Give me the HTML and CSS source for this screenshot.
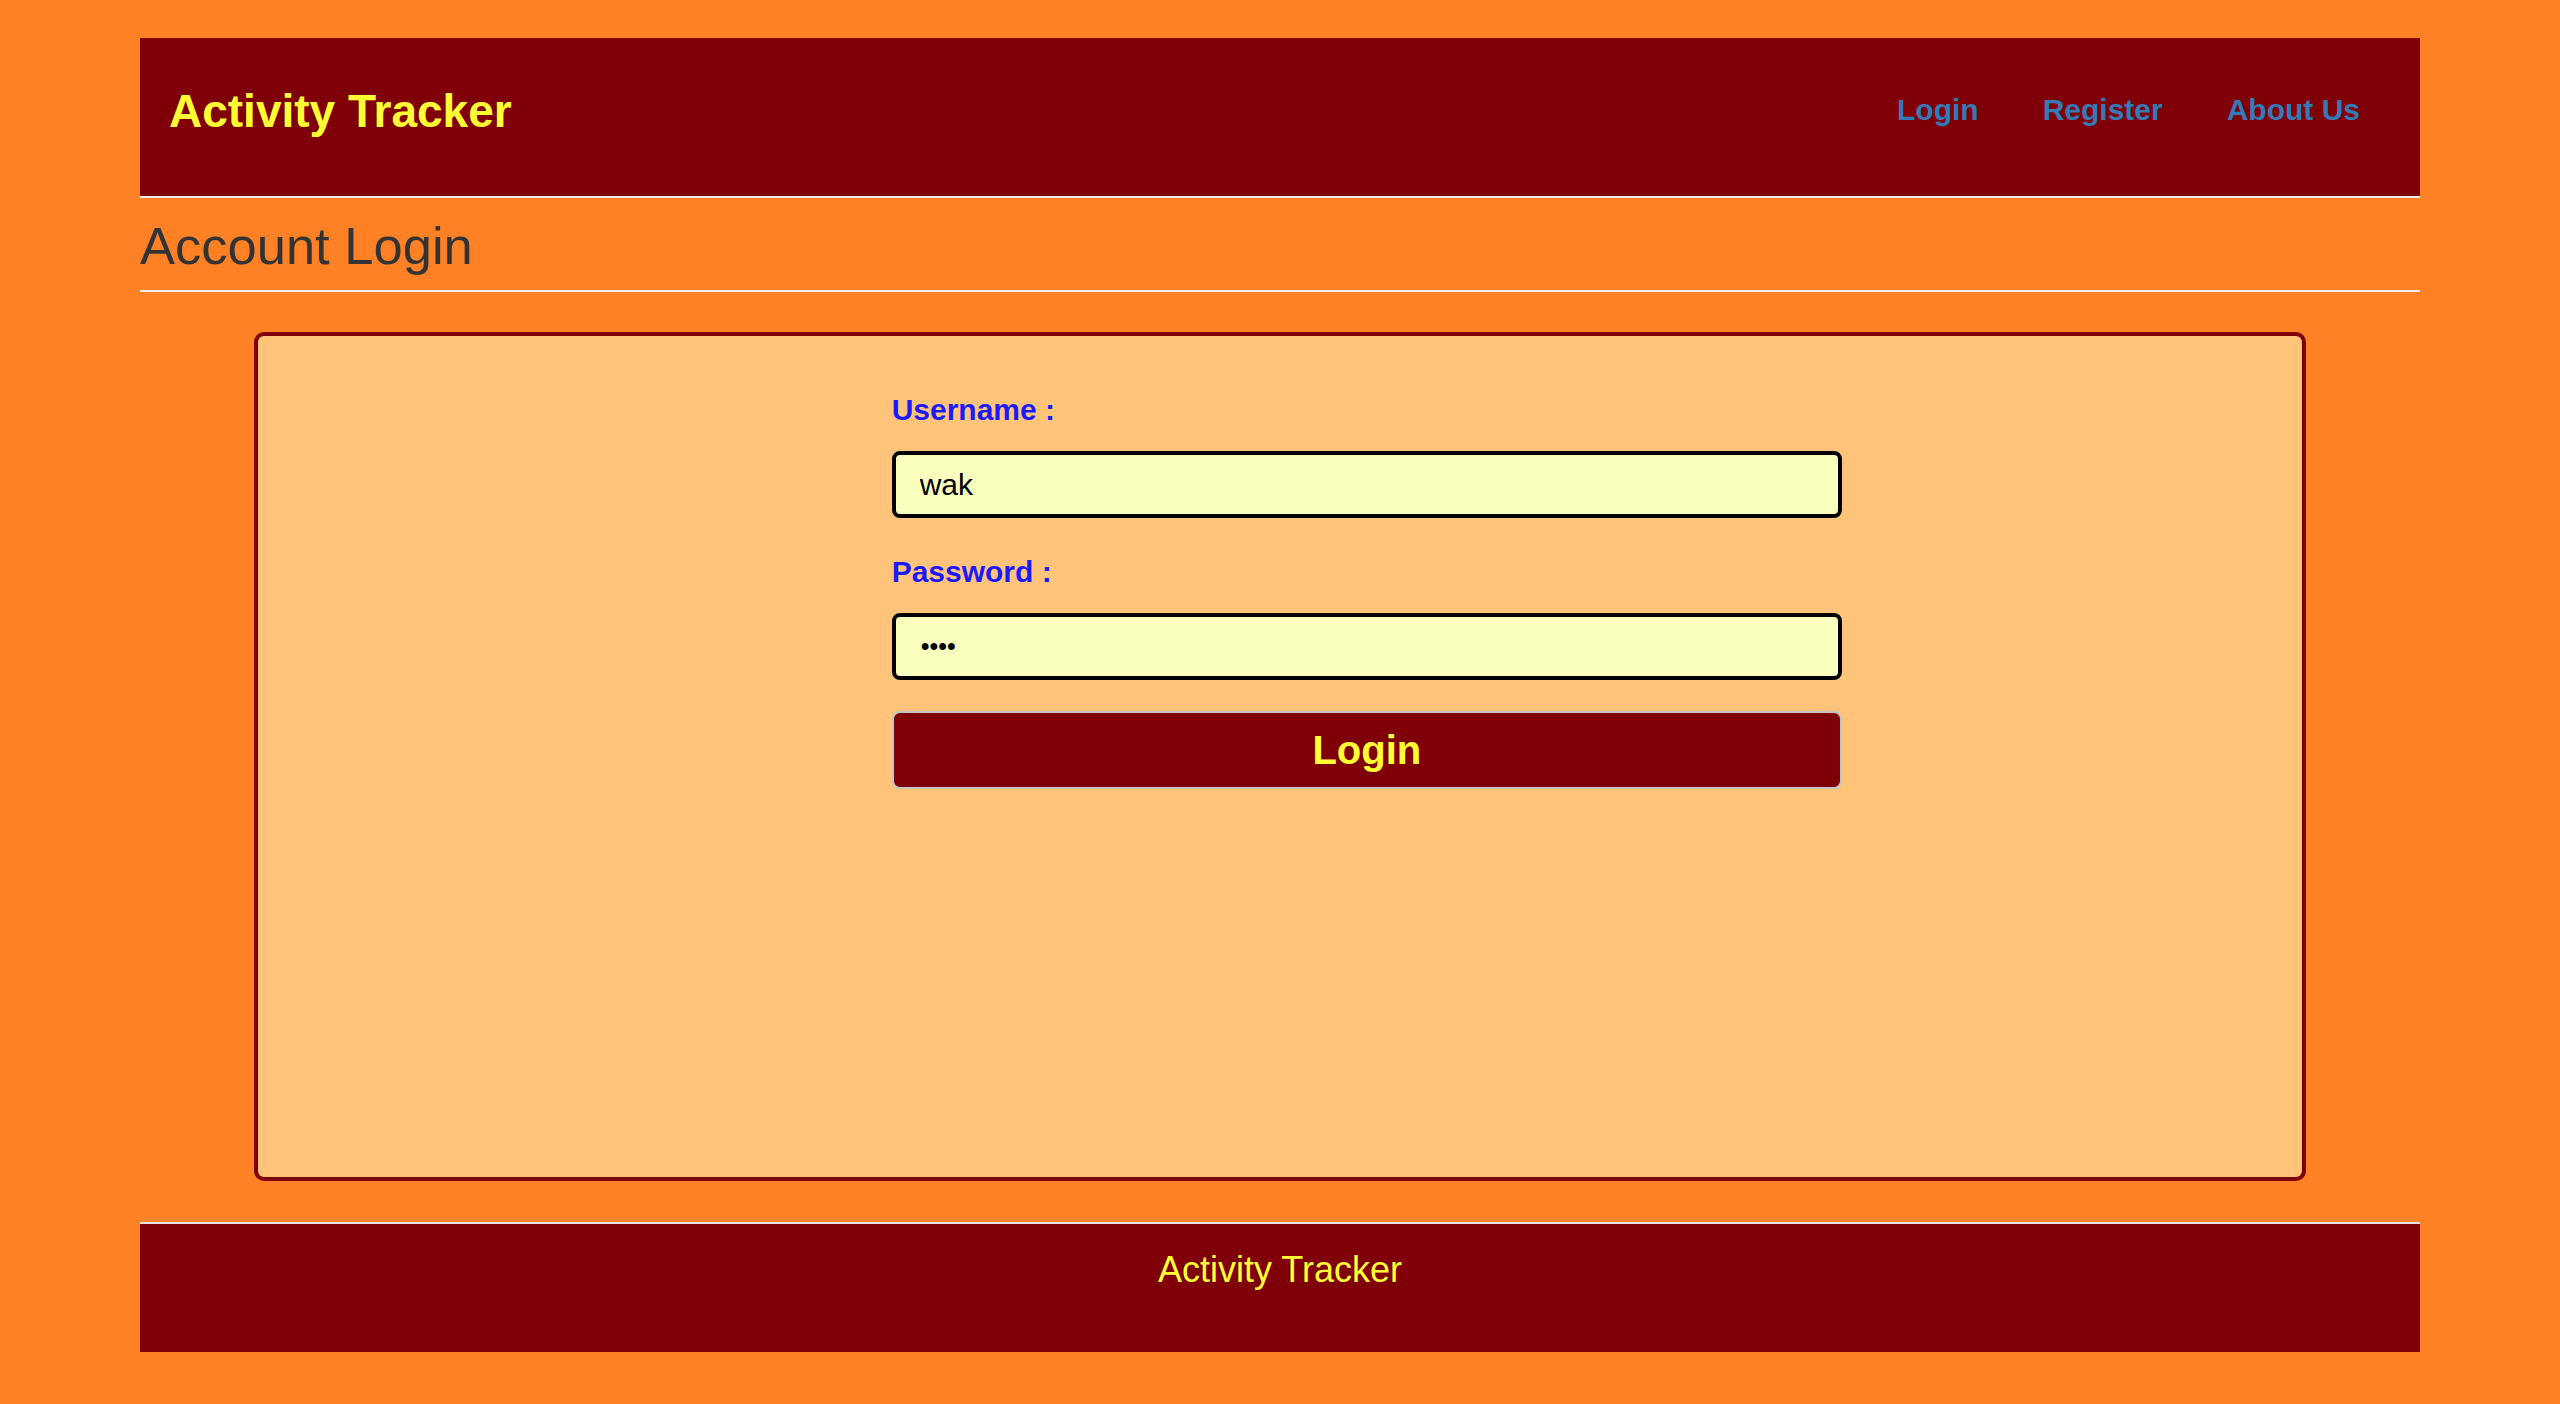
FILE: index.html
```html
<!DOCTYPE html>
<html lang="en">
<head>
<meta charset="utf-8">
<title>Account Login - Activity Tracker</title>
<link rel="stylesheet" href="styles.css">
</head>
<body>
<div class="page">
  <header class="topbar">
    <div class="brand">Activity Tracker</div>
    <nav class="nav">
      <a class="nav-link" href="#">Login</a>
      <a class="nav-link" href="#">Register</a>
      <a class="nav-link" href="#">About Us</a>
    </nav>
  </header>

  <h2 class="page-title">Account Login</h2>

  <main class="card">
    <form class="login-form">
      <label class="field-label" for="username">Username :</label>
      <input class="field-input" id="username" type="text" value="wak">
      <label class="field-label" for="password">Password :</label>
      <input class="field-input field-password" id="password" type="password" value="abcd">
      <button class="submit-btn" type="button">Login</button>
    </form>
  </main>

  <footer class="footer">
    <div class="footer-text">Activity Tracker</div>
  </footer>
</div>
</body>
</html>
```

FILE: styles.css
```css
* {
  box-sizing: border-box;
}

html, body {
  margin: 0;
  padding: 0;
}

body {
  background: #ff8125;
  font-family: "Liberation Sans", Arial, Helvetica, sans-serif;
  color: #333333;
}

.page {
  width: 2280px;
  margin: 0 auto;
  padding-top: 38px;
}

/* Header */
.topbar {
  height: 160px;
  background: #7f0007;
  border-bottom: 2px solid #ececec;
  display: flex;
  justify-content: space-between;
  align-items: flex-start;
  padding: 0 28px 0 29px;
}

.brand {
  margin-top: 50px;
  font-size: 46px;
  line-height: 46px;
  font-weight: bold;
  color: #ffff33;
}

.nav {
  display: flex;
  margin-top: 57px;
}

.nav-link {
  display: block;
  padding: 0 32px;
  font-size: 30px;
  line-height: 30px;
  font-weight: bold;
  color: #337ab7;
  text-decoration: none;
}

/* Page title */
.page-title {
  margin: 22px 0 0;
  padding-bottom: 18px;
  border-bottom: 2px solid #eeeeee;
  font-size: 52.5px;
  line-height: 52px;
  font-weight: normal;
  color: #333333;
}

/* Card */
.card {
  width: 90%;
  height: 849px;
  margin: 40px auto 0;
  background: #ffc47a;
  border: 4px solid #7f0007;
  border-radius: 10px;
}

.login-form {
  display: flex;
  flex-direction: column;
  margin-left: 31%;
  width: 46.5%;
  padding-top: 59px;
}

.field-label {
  display: block;
  font-size: 30px;
  line-height: 30px;
  font-weight: bold;
  color: #1a1aff;
  margin-bottom: 26px;
}

.field-input {
  display: block;
  width: 100%;
  height: 67px;
  margin: 0 0 39px;
  padding: 0 24px;
  background: #faffbd;
  border: 4px solid #000000;
  border-radius: 8px;
  font-family: "Liberation Sans", Arial, Helvetica, sans-serif;
  font-size: 30px;
  color: #000000;
  outline: none;
}

.field-password {
  margin-bottom: 31px;
  font-size: 25px;
  padding-left: 25px;
}

.submit-btn {
  display: block;
  width: 100%;
  height: 78px;
  padding: 0;
  background: #7f0007;
  border: 2px solid #c4c4c4;
  border-radius: 8px;
  font-family: "Liberation Sans", Arial, Helvetica, sans-serif;
  font-size: 40px;
  line-height: 40px;
  font-weight: bold;
  color: #ffff33;
  cursor: pointer;
}

/* Footer */
.footer {
  margin-top: 41px;
  height: 130px;
  background: #7f0007;
  border-top: 2px solid #e4e4e4;
  padding-top: 28px;
  text-align: center;
}

.footer-text {
  font-size: 36px;
  line-height: 36px;
  color: #ffff33;
}
```
